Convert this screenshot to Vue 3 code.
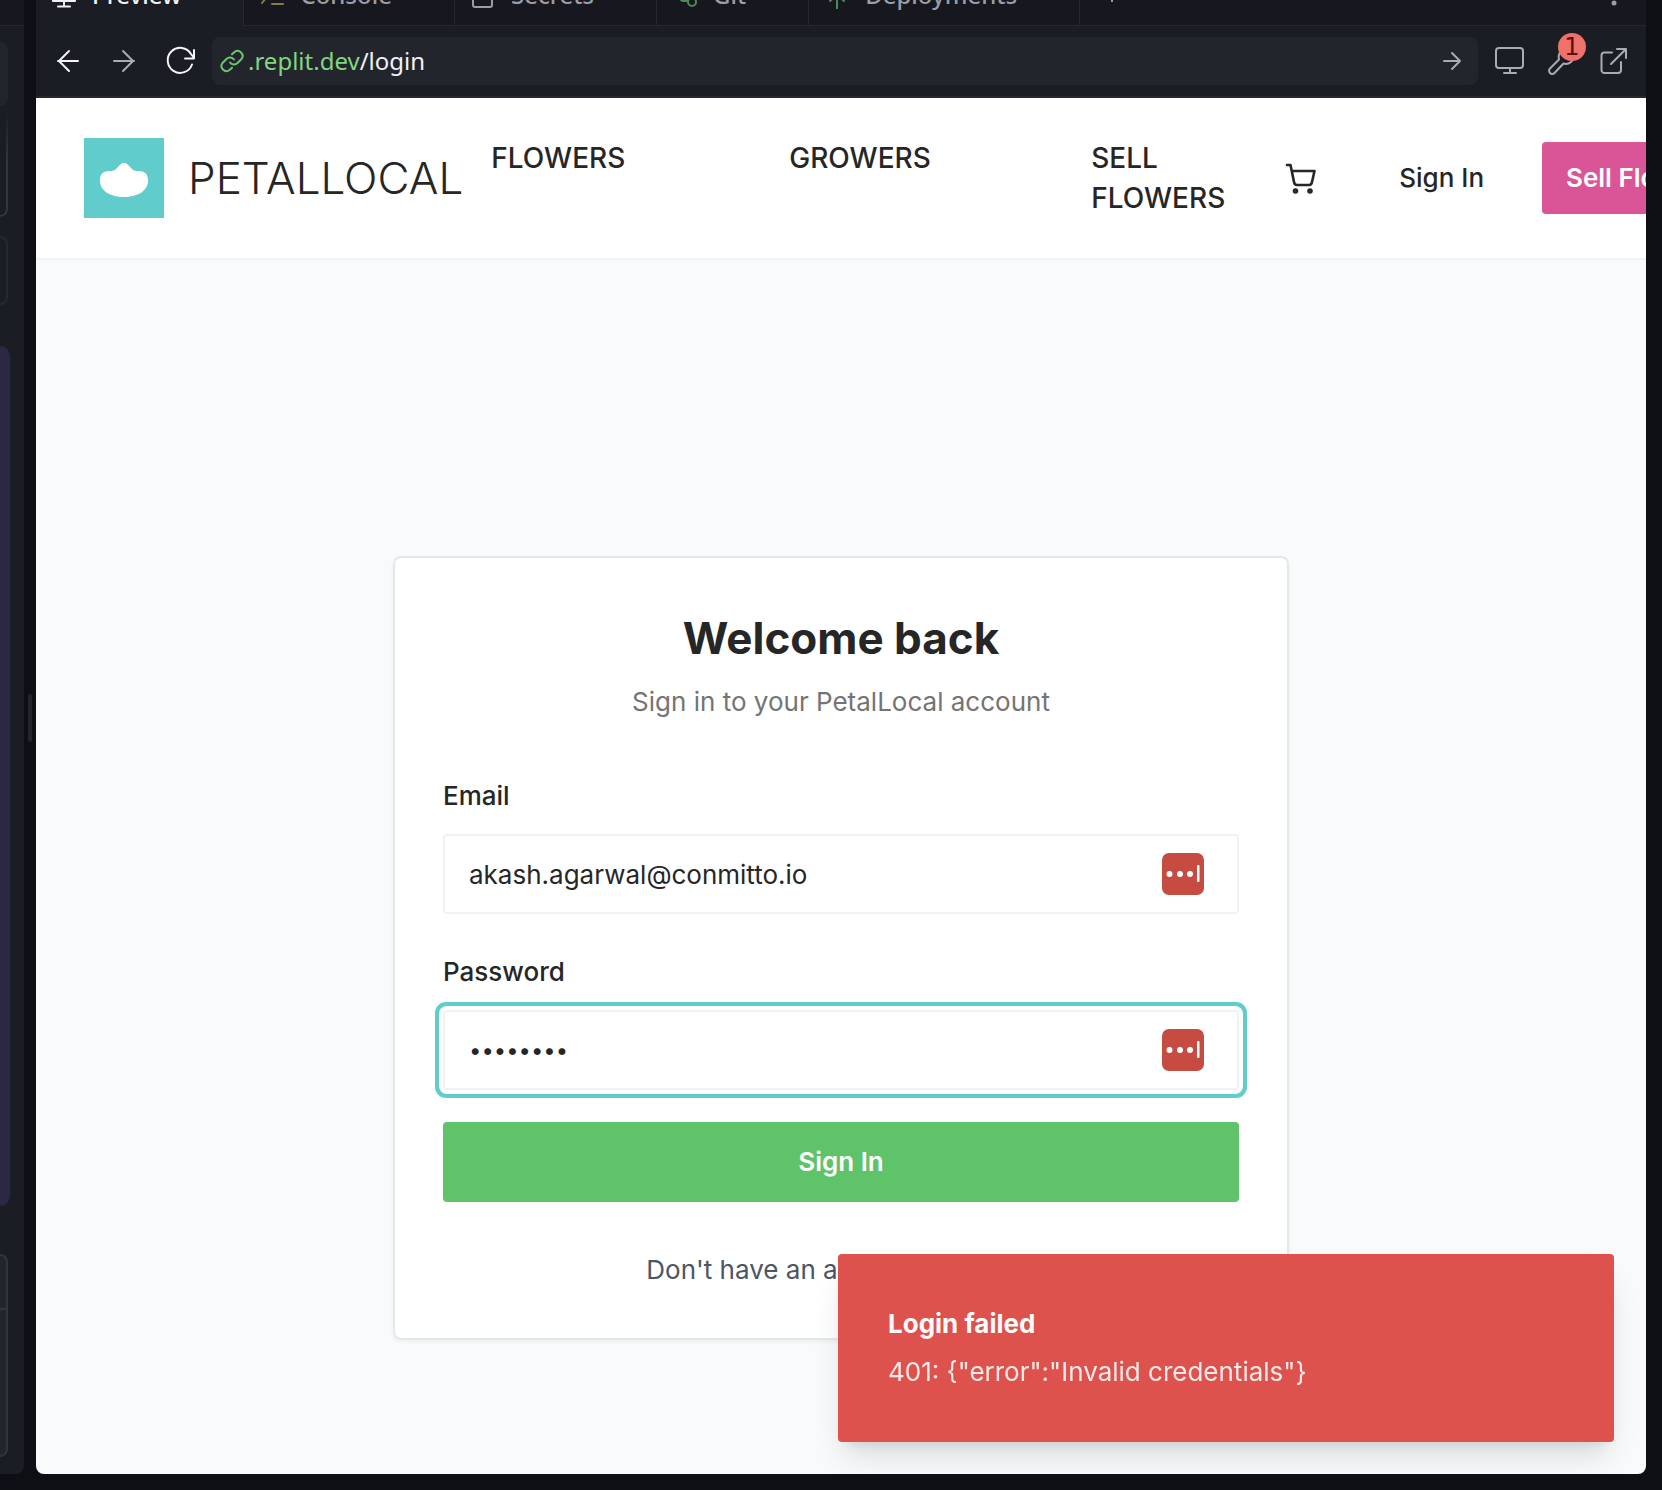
<script setup>
import { ref } from 'vue'

const tabs = ['Preview', 'Console', 'Secrets', 'Git', 'Deployments']
const links = ['Flowers', 'Growers', 'Sell Flowers']
const email = ref('akash.agarwal@conmitto.io')
const password = ref('petals24')
</script>

<template>
  <div class="workspace">
    <aside class="side">
      <div class="side-tabs"></div>
      <div class="side-chip"></div>
      <div class="side-diff"></div>
      <div class="side-outline"></div>
      <div class="side-message"></div>
      <div class="side-composer"></div>
    </aside>

    <div class="splitter"><span class="grip"></span></div>

    <main class="pane">
      <div class="tabbar">
        <button v-for="(tab, i) in tabs" :key="tab" type="button" class="tab" :class="{ active: i === 0 }">
          <svg class="tab-icon" viewBox="0 0 28 28" fill="none" stroke="currentColor" stroke-width="2" stroke-linecap="round" stroke-linejoin="round">
            <path v-if="i === 0" d="M3 3h22v17H3zM14 20v5.500M8 25.500h12" />
            <path v-else-if="i === 1" class="gold" d="M4 7l6 7.500-6 7.500M14 23h11" />
            <path v-else-if="i === 2" d="M6 12h15a2 2 0 0 1 2 2v10a2 2 0 0 1-2 2H6a2 2 0 0 1-2-2V14a2 2 0 0 1 2-2zM8 12V8a5.500 5.500 0 0 1 11 0v4" />
            <g v-else-if="i === 3" class="green">
              <circle cx="12" cy="5" r="4" /><circle cx="21" cy="21" r="4" />
              <path d="M12 9v8M17 20h-5a4 4 0 0 1-3-2" />
            </g>
            <path v-else class="green" d="M14 4v24M14 14l-7 6M14 14l7 6" />
          </svg>
          <span>{{ tab }}</span>
        </button>
        <button type="button" class="tab-add" aria-label="New tab">
          <svg viewBox="0 0 20 20" fill="none" stroke="currentColor" stroke-width="2"><path d="M10 3v14M3 10h14" /></svg>
        </button>
        <button type="button" class="tab-menu" aria-label="Tab menu">
          <svg viewBox="0 0 24 24" fill="currentColor"><circle cx="12" cy="4" r="2.500" /><circle cx="12" cy="12" r="2.500" /><circle cx="12" cy="20" r="2.500" /></svg>
        </button>
      </div>

      <div class="toolbar">
        <button type="button" class="tool bright" aria-label="Back">
          <svg viewBox="0 0 32 32"><path d="M26 16H6M17 6L7 16l10 10" /></svg>
        </button>
        <button type="button" class="tool" aria-label="Forward">
          <svg viewBox="0 0 32 32"><path d="M6 16h20M15 6l10 10-10 10" /></svg>
        </button>
        <button type="button" class="tool bright reload" aria-label="Reload">
          <svg viewBox="0 0 32 32"><path d="M28 19.500A12.500 12.500 0 1 1 27 9l3 4M30 5v8.500h-9" /></svg>
        </button>
        <div class="address">
          <svg class="chain" viewBox="0 0 24 24"><path d="M10 13.500a5 5 0 0 0 7.500.5l4-4a5 5 0 0 0-7-7l-2.500 2.300M14 10.500a5 5 0 0 0-7.500-.5l-4 4a5 5 0 0 0 7 7L12 18.700" /></svg>
          <a href="#" class="url"><span class="host">.replit.dev</span>/login</a>
          <button type="button" class="go" aria-label="Go">
            <svg viewBox="0 0 24 24"><path d="M4 12h16M12 4l8 8-8 8" /></svg>
          </button>
        </div>
        <button type="button" class="tool" aria-label="Device size">
          <svg viewBox="0 0 32 32"><rect x="2" y="3" width="27" height="20" rx="3" /><path d="M16 23v5M10 28h12" /></svg>
        </button>
        <button type="button" class="tool" aria-label="Developer tools">
          <svg viewBox="0 0 32 32"><path d="M13 14.500L4 23.500a3 3 0 0 0 4.500 4.500l9-9.500c5 1.500 11-2 10-9l-5 4-4-4 4-5c-7-1-11 4-9.500 10z" /></svg>
          <span class="badge">1</span>
        </button>
        <button type="button" class="tool" aria-label="Open in new tab">
          <svg viewBox="0 0 32 32"><path d="M14 7.500H6.500a3 3 0 0 0-3 3V25a3 3 0 0 0 3 3H20a3 3 0 0 0 3-3v-8M19 4h9v9M28 4L13 19" /></svg>
        </button>
      </div>

      <div class="site">
        <header class="header">
          <a href="#" class="brand">
            <svg class="logo" viewBox="0 0 80 80">
              <rect width="80" height="80" fill="#60cdcc" />
              <path fill="#fff" d="M25 33C29 33 31 32.500 33.500 29.500C36 26.500 37.500 25 40 25C42.500 25 44 26.500 46.500 29.500C49 32.500 51 33 55 33C61.500 33 64 36.500 64 43C64 52 54.500 59 40 59C25.500 59 16 52 16 43C16 36.500 18.500 33 25 33Z" />
            </svg>
            <span>PETALLOCAL</span>
          </a>
          <nav class="nav">
            <a v-for="link in links" :key="link" href="#">{{ link }}</a>
          </nav>
          <div class="actions">
            <button type="button" class="cart" aria-label="Cart">
              <svg viewBox="0 0 32 32" fill="none" stroke="currentColor" stroke-width="2.600" stroke-linecap="round" stroke-linejoin="round">
                <path d="M2 3h3.500l3.500 17q.5 3 3 3h12q2.500 0 3-3l2.500-11H7" />
                <circle cx="10.500" cy="29" r="1.500" /><circle cx="25" cy="29" r="1.500" />
              </svg>
            </button>
            <a href="#" class="signin">Sign In</a>
            <button type="button" class="sell">Sell Flowers</button>
          </div>
        </header>

        <section class="content">
          <form class="card" @submit.prevent>
            <h1>Welcome back</h1>
            <p class="subtitle">Sign in to your PetalLocal account</p>

            <label for="email">Email</label>
            <div class="field">
              <input id="email" v-model="email" type="email" />
              <svg class="vault" viewBox="0 0 42 42"><rect width="42" height="42" rx="7" fill="#c64b40" /><g fill="#fff"><circle cx="7.500" cy="21" r="3" /><circle cx="18" cy="21" r="3" /><circle cx="28" cy="21" r="3" /><rect x="35" y="12" width="2.500" height="17" rx="1" /></g></svg>
            </div>

            <label for="password">Password</label>
            <div class="field">
              <input id="password" v-model="password" type="password" class="focused" />
              <svg class="vault" viewBox="0 0 42 42"><rect width="42" height="42" rx="7" fill="#c64b40" /><g fill="#fff"><circle cx="7.500" cy="21" r="3" /><circle cx="18" cy="21" r="3" /><circle cx="28" cy="21" r="3" /><rect x="35" y="12" width="2.500" height="17" rx="1" /></g></svg>
            </div>

            <button type="submit" class="submit">Sign In</button>
            <p class="signup">Don't have an account? <a href="#">Sign up</a></p>
          </form>
        </section>

        <div class="toast" role="alert">
          <strong>Login failed</strong>
          <span>401: {"error":"Invalid credentials"}</span>
        </div>
      </div>
    </main>
  </div>
</template>

<style>
body { background: #0e0f14; }
</style>

<style scoped>
.workspace {
  display: flex;
  box-sizing: border-box;
  height: 100vh;
  padding: 0 16px 16px 0;
  background: #0e0f14;
  font-family: Inter, "Liberation Sans", sans-serif;
  font-size: 26px;
  line-height: 40px;
  color: #262626;
  overflow: hidden;
}
.workspace * { box-sizing: border-box; }
button { margin: 0; padding: 0; border: 0; background: none; color: inherit; font: inherit; }
a { color: inherit; text-decoration: none; }
svg { display: block; flex: none; }
h1, p { margin: 0; }

.side {
  display: flex;
  flex-direction: column;
  flex: none;
  width: 24px;
  padding-bottom: 17px;
  background: #1b1d24;
  border-bottom-right-radius: 8px;
  overflow: hidden;
}
.side > div { flex: none; width: 8px; }
.side > .side-tabs { width: 24px; height: 26px; background: #17171f; border-bottom: 1px solid #28262e; }
.side-chip { height: 64px; margin-top: 16px; background: #23252d; border-radius: 0 8px 8px 0; }
.side-diff {
  height: 111px;
  border: solid #2d3a37;
  border-width: 0 2px 2px 0;
  border-bottom-right-radius: 16px;
  mask-image: linear-gradient(transparent, #000 50%);
}
.side-outline { height: 69px; margin-top: 19px; border: 2px solid #262931; border-left: 0; border-radius: 0 16px 16px 0; }
.side > .side-message { flex: 1; width: 10px; margin: 41px 0 48px; background: #2b2745; border-radius: 0 16px 16px 0; }
.side-composer {
  height: 203px;
  border: 2px solid #32353e;
  border-left: 0;
  border-radius: 0 16px 16px 0;
  background: linear-gradient(#32353e, #32353e) 0 52px / 100% 2px no-repeat #23252d;
}

.splitter { display: flex; flex: none; align-items: center; justify-content: center; width: 12px; padding-bottom: 38px; }
.grip { width: 4px; height: 48px; border-radius: 2px; background: #23252d; }

.pane { display: flex; flex-direction: column; flex: 1; min-width: 0; border-radius: 0 0 8px 8px; overflow: hidden; background: #1b1d24; }

.tabbar {
  display: flex;
  align-items: flex-end;
  flex: none;
  height: 26px;
  overflow: hidden;
  background: #17171f;
  color: #9b9ca6;
  font-family: "Noto Sans", sans-serif;
  font-size: 24px;
  font-weight: 500;
  box-shadow: inset 0 -1px #28262e;
}
.tab { display: flex; align-items: center; flex: none; gap: 14px; height: 62px; padding: 0 62px 0 14px; border-right: 1px solid #28262e; }
.tab.active { background: #1b1d24; color: #f0f1f4; }
.tab-icon { width: 28px; height: 28px; }
.gold { stroke: #8a7a45; }
.green { stroke: #4e8a54; }
.tab-add { height: 62px; margin-left: 22px; }
.tab-add svg { width: 20px; height: 20px; }
.tab-menu { height: 62px; margin: 0 20px 0 auto; }
.tab-menu svg { width: 24px; height: 24px; }

.toolbar { display: flex; align-items: center; flex: none; gap: 20px; height: 72px; padding: 0 16px; border-bottom: 2px solid #262830; }
.tool { position: relative; flex: none; color: #a9abb5; }
.tool svg, .address svg { fill: none; stroke: currentColor; stroke-width: 2; stroke-linecap: round; stroke-linejoin: round; }
.tool svg { width: 32px; height: 32px; }
.tool + .tool { margin-left: 4px; }
.address ~ .tool { margin-left: 0; }
.tool.bright { color: #f4f5f7; }
.reload { margin-right: -4px; }
.badge {
  position: absolute;
  left: 12px;
  top: -12px;
  width: 28px;
  height: 28px;
  border-radius: 14px;
  background: #ef716b;
  color: #5a0f0b;
  font: 24px/28px "DejaVu Sans", sans-serif;
  text-align: center;
}
.address {
  display: flex;
  align-items: center;
  flex: 1;
  gap: 4px;
  height: 48px;
  margin-right: -4px;
  padding: 0 14px 0 8px;
  border-radius: 8px;
  background: #23252d;
  color: #f0f1f4;
  font-family: "Noto Sans", sans-serif;
  font-size: 24px;
}
.address svg { width: 24px; height: 24px; }
.chain { color: #6cc56f; }
.host { color: #81d681; }
.url { flex: 1; }
.go { color: #a9abb5; }

.site { position: relative; display: flex; flex-direction: column; flex: 1; background: #f9fafc; overflow: hidden; }
.header { display: flex; align-items: center; flex: none; padding: 40px 48px; border-bottom: 2px solid #f1f3f6; background: #fff; font-weight: 500; }
.brand { display: flex; align-items: center; flex: none; gap: 24px; font-size: 44px; font-weight: 300; }
.logo { width: 80px; height: 80px; }
.nav { display: flex; flex: none; align-self: stretch; gap: 164px; margin-left: 28px; font-size: 28px; text-transform: uppercase; }
.nav a { max-width: 138px; }
.actions { display: flex; align-items: center; flex: none; gap: 28px; margin-left: 32px; }
.cart { display: flex; justify-content: center; width: 80px; }
.cart svg { width: 32px; height: 32px; }
.signin { padding: 0 30px; }
.sell { height: 72px; padding: 0 24px; border-radius: 4px; background: #da5597; color: #fff; font-weight: 600; white-space: nowrap; }

.content { display: flex; justify-content: center; padding: 296px 48px 0; }
.card { width: 100%; max-width: 896px; padding: 48px; border: 2px solid #e3e9e9; border-radius: 8px; background: #fff; box-shadow: 0 2px 4px rgba(0, 0, 0, 0.05); }
h1 { font-size: 44px; line-height: 64px; font-weight: 700; text-align: center; }
.subtitle { margin: 12px 0 54px; text-align: center; color: #747474; }
label { display: block; margin-bottom: 18px; font-weight: 500; }
.field { position: relative; }
.field + label { margin-top: 38px; }
input { display: block; width: 100%; height: 80px; padding: 0 96px 0 24px; border: 2px solid #eff3f3; border-radius: 4px; outline: 0; background: #fff; color: inherit; font: inherit; }
input[type="password"] { font-size: 22px; }
.focused { box-shadow: 0 0 0 4px #fff, 0 0 0 8px #60cdcc; }
.vault { position: absolute; right: 35px; top: 19px; width: 42px; height: 42px; }
.submit { display: block; width: 100%; height: 80px; margin-top: 32px; border-radius: 4px; background: #5fc36a; color: #fff; font-weight: 600; }
.signup { margin-top: 48px; text-align: center; color: #4b5563; }
.signup a { color: #60cdcc; }

.toast {
  position: absolute;
  right: 32px;
  bottom: 32px;
  display: flex;
  flex-direction: column;
  gap: 8px;
  width: 776px;
  max-width: calc(100% - 64px);
  padding: 50px;
  border-radius: 4px;
  background: #dd524c;
  color: #fafafa;
  box-shadow: 0 20px 30px -6px rgba(0, 0, 0, 0.12), 0 8px 12px -8px rgba(0, 0, 0, 0.12);
}
.toast strong { font-weight: 700; }
.toast span { opacity: 0.9; }
</style>
